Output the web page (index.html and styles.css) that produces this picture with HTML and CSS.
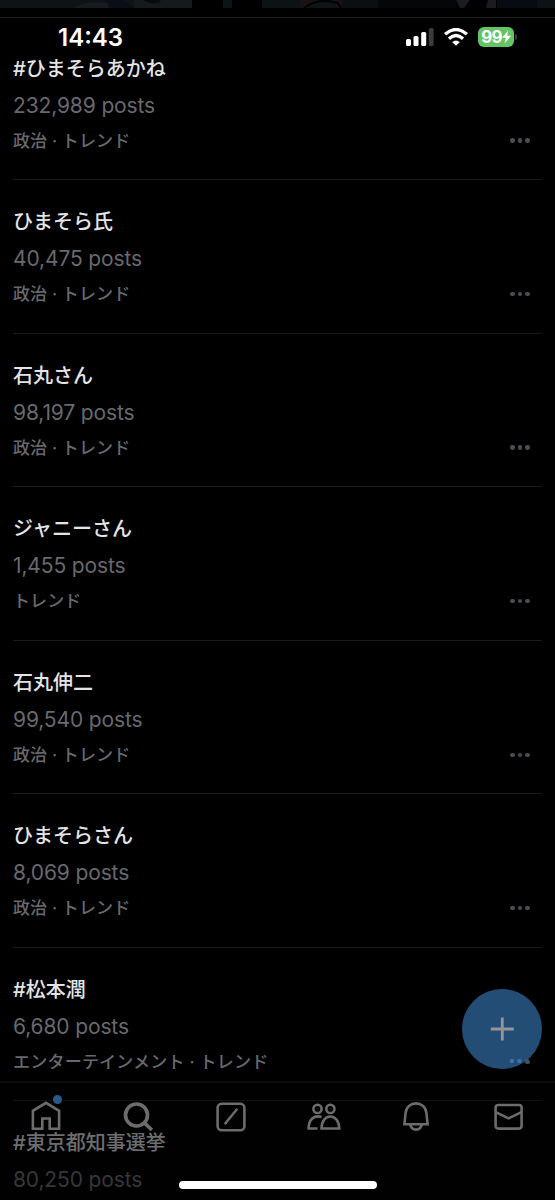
FILE: index.html
```html
<!DOCTYPE html>
<html lang="ja">
<head>
<meta charset="utf-8">
<title>トレンド</title>
<link rel="stylesheet" href="styles.css">
</head>
<body>
<div class="phone">
  <header class="statusbar">
    <span class="clock">14:43</span>
    <div class="indicators">
      <svg class="signal" width="28" height="18" viewBox="0 0 28 18"><g fill="#fff"><rect x="0" y="11" width="5" height="7" rx="1.5"/><rect x="7.5" y="8" width="5" height="10" rx="1.5"/><rect x="15.2" y="4" width="5" height="14" rx="1.5"/></g><rect x="22.8" y="0" width="4.8" height="18" rx="1.5" fill="#3b3b3d"/></svg>
      <svg class="wifi" width="24" height="18" viewBox="0 0 24 18"><g fill="none" stroke="#fff" stroke-width="3.4"><path d="M1.1 6.3Q12-3.2 22.9 6.3"/><path d="M4.9 10.7Q12 4.4 19.1 10.7"/></g><path d="M8.2 14Q12 11 15.8 14L12 17.800Z" fill="#fff"/></svg>
      <div class="battery"><span>99</span><svg width="9" height="14" viewBox="0 0 9 14"><path d="M6.2.5L.2 7.8H3.800L2.600 13.5L9 5.800H5.2Z" fill="#fff"/></svg></div>
      <i class="cap"></i>
    </div>
  </header>

  <svg class="media" width="555" height="8" viewBox="0 0 555 8">
    <rect width="192" height="8" fill="#0e1315"/>
    <path d="M74 8C82 1 98 2 108 3V8Z" fill="#171b1e"/>
    <path d="M104 0H124L134 8H112Z" fill="#0a0e17"/>
    <path d="M134 0H143L160 4V0H192V8H134Z" fill="#151a1d"/>
    <path d="M143 0H161C157 5 151 4 143 0Z" fill="#06090d"/>
    <rect x="223" width="9" height="8" fill="#0e1416"/>
    <rect x="262" width="38" height="8" fill="#0d1214"/>
    <rect x="300" width="42" height="8" fill="#191314"/>
    <path d="M304 8Q318-3 338 3L341 8" fill="#101416" stroke="#020203" stroke-width="2"/>
    <rect x="342" width="36" height="8" fill="#0b0f11"/>
    <rect x="378" width="78" height="8" fill="#050608"/>
    <path d="M456 0H470L464 8H460ZM488 0H496V8H486Z" fill="#1a1d1f"/>
    <rect x="497" width="40" height="8" fill="#070c12"/>
    <rect x="537" width="18" height="8" fill="#0d1215"/>
  </svg>
  <main class="trends">
    <article class="trend"><h2>#ひまそらあかね</h2><p class="count">232,989 posts</p><p class="meta">政治 · トレンド<span class="more"><i></i><i></i><i></i></span></p></article>
    <article class="trend"><h2>ひまそら氏</h2><p class="count">40,475 posts</p><p class="meta">政治 · トレンド<span class="more"><i></i><i></i><i></i></span></p></article>
    <article class="trend"><h2>石丸さん</h2><p class="count">98,197 posts</p><p class="meta">政治 · トレンド<span class="more"><i></i><i></i><i></i></span></p></article>
    <article class="trend"><h2>ジャニーさん</h2><p class="count">1,455 posts</p><p class="meta">トレンド<span class="more"><i></i><i></i><i></i></span></p></article>
    <article class="trend"><h2>石丸伸二</h2><p class="count">99,540 posts</p><p class="meta">政治 · トレンド<span class="more"><i></i><i></i><i></i></span></p></article>
    <article class="trend"><h2>ひまそらさん</h2><p class="count">8,069 posts</p><p class="meta">政治 · トレンド<span class="more"><i></i><i></i><i></i></span></p></article>
    <article class="trend"><h2>#松本潤</h2><p class="count">6,680 posts</p><p class="meta wide">エンターテインメント · トレンド<span class="more"><i></i><i></i><i></i></span></p></article>
    <article class="trend faded"><h2>#東京都知事選挙</h2><p class="count">80,250 posts</p></article>
  </main>

  <button class="compose" aria-label="New post"><svg width="80" height="80" viewBox="0 0 80 80"><path d="M40.300 28.500V51.500M28.800 40H51.800" stroke="#969696" stroke-width="2.800"/><g fill="#3d72ad"><circle cx="49.900" cy="72" r="2.200"/><circle cx="57.400" cy="72" r="2.200"/></g><circle cx="64.900" cy="72" r="2.200" fill="#48525d"/></svg></button>

  <nav class="tabs">
    <a><svg viewBox="0 0 34 34"><path d="M3.900 28.800V10.800L17 2.800L30.100 10.800V28.800H20.700V18.500H13.300V28.800Z"/></svg><i class="dot"></i></a>
    <a><svg viewBox="0 0 34 34"><circle cx="14.500" cy="15" r="11" stroke-width="3.700"/><path d="M22.300 22.800L29.900 30" stroke-width="3.700"/></svg></a>
    <a><svg viewBox="0 0 34 34"><rect x="3.600" y="3.700" width="26.800" height="26.600" rx="4"/><path d="M10.700 24.300L23.300 8.800"/></svg></a>
    <a><svg viewBox="0 0 34 34"><circle cx="10.500" cy="8.900" r="4.100"/><circle cx="23.400" cy="8.900" r="4.100"/><path d="M10.500 28.500H1.600C1.600 19.500 7 14.800 14.600 16.900M14.500 28.500C14.900 12.400 31.700 12.400 32.300 28.500Z"/></svg></a>
    <a><svg viewBox="0 0 34 34"><path d="M5.400 24.200L6.600 12.800C8 .2 26 .2 27.400 12.800L28.600 24.200ZM11.300 24.200C12.400 31.400 21.600 31.400 22.700 24.200"/></svg></a>
    <a><svg viewBox="0 0 34 34"><rect x="3.600" y="5" width="26" height="23.600" rx="2.500"/><path d="M3.700 12.200L16.600 18.400L29.500 12.200"/></svg></a>
  </nav>
  <div class="home-indicator"></div>
</div>
</body>
</html>
```
FILE: styles.css
```css
* { box-sizing: border-box; }
body { margin: 0; background: #000; }
.phone {
  position: relative;
  width: 555px;
  height: 1200px;
  overflow: hidden;
  background: #000;
  font-family: Inter, "Noto Sans CJK JP", sans-serif;
}
.statusbar {
  position: absolute;
  inset: 18px 0 auto;
  height: 38px;
  padding: 0 38px 0 58px;
  display: flex;
  justify-content: space-between;
  align-items: center;
  color: #fff;
}
.clock { font-size: 24px; font-weight: 600; letter-spacing: 0; }
.indicators { display: flex; align-items: center; }
.wifi { margin-left: 10px; }
.battery {
  margin-left: 10px;
  width: 36px;
  height: 20px;
  border-radius: 6px;
  background: #65c466;
  display: flex;
  align-items: center;
  justify-content: center;
  font-size: 17px;
  font-weight: 700;
  letter-spacing: -.8px;
}
.cap { width: 2px; height: 6px; margin-left: 1px; border-radius: 0 2px 2px 0; background: #39393b; }

.media { display: block; }

.trends { margin-top: 9px; border-top: 1px solid #1b1b1c; padding: 8.500px 13px 0; }
.trend { height: 153.570px; padding-top: 27px; border-bottom: 1px solid #1a1a1b; }
.trend h2, .trend p { margin: 0; white-space: nowrap; }
.trend h2 { font-size: 20px; font-weight: 500; line-height: 30px; color: #e4e4e5; }
.trend .count { margin-top: 7px; font-size: 21px; line-height: 30px; letter-spacing: -.13px; color: #68696d; }
.trend .meta { margin-top: 6px; font-size: 17px; font-weight: 500; line-height: 28px; letter-spacing: .12px; color: #68696d; display: flex; justify-content: space-between; align-items: center; }
.trend .wide { letter-spacing: .22px; }
.more { display: flex; gap: 3.200px; margin-right: 12.500px; }
.more i { width: 4.300px; height: 4.300px; border-radius: 50%; background: #4c4d51; }
.faded { border: 0; }
.faded h2 { color: #a8a8a8; }
.faded .count { color: #545457; }

.compose {
  position: absolute;
  left: 462px;
  top: 989px;
  width: 80px;
  height: 80px;
  padding: 0;
  border: 0;
  border-radius: 50%;
  background: #234d75;
}
.compose svg { display: block; }
.tabs {
  position: absolute;
  inset: 1081px 0 0;
  padding-top: 16.500px;
  border-top: 2px solid #0b0b0c;
  background: rgba(2, 2, 3, .35);
  display: grid;
  grid-template-columns: repeat(6, 92.500px);
}
.tabs a { position: relative; height: 34px; display: flex; justify-content: center; }
.tabs svg { width: 34px; height: 34px; fill: none; stroke: #6c6c6c; stroke-width: 2.600; }
.dot { position: absolute; left: 53px; top: -4.500px; width: 9px; height: 9px; border-radius: 50%; background: #285a8c; }
.home-indicator { position: absolute; left: 179px; top: 1181px; width: 198px; height: 8px; border-radius: 4px; background: #fff; }
```
